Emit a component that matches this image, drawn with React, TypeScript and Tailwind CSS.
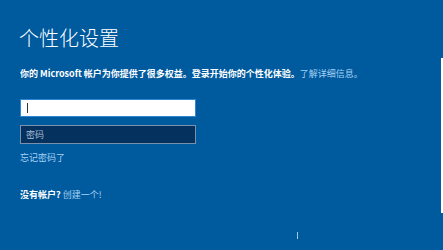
export default function App() {
  const cjk = { fontFamily: '"Noto Sans CJK SC", "Noto Sans", sans-serif' };
  return (
    <div className="relative w-[443px] h-[250px] overflow-hidden bg-[#005a9e] text-white" style={cjk}>
      <div className="flex flex-col pl-[19px] pt-[26px]">
        <h1 className="text-[20px] leading-[24px] font-light">个性化设置</h1>
        <p className="mt-[18px] pl-px text-[9px] leading-[12px] font-bold whitespace-nowrap">
          你的 Microsoft 帐户为你提供了很多权益。登录开始你的个性化体验。
          <span className="text-[#a6d2f5] font-normal">了解详细信息。</span>
        </p>
        <div className="mt-[19px] ml-px w-[176px] h-[18px] bg-white border border-[#2a86d6] flex items-center pl-[6px]">
          <div className="w-px h-[10px] bg-[#333]" />
        </div>
        <div className="mt-[8px] ml-px w-[176px] h-[19px] bg-[#05315e] border border-[#7990ad] flex items-center pl-[5px] text-[9px] text-[#a9bcd3]">
          密码
        </div>
        <div className="mt-[8px] pl-px text-[9px] leading-[12px] text-[#a6d2f5]">忘记密码了</div>
        <div className="mt-[25px] pl-px text-[9px] leading-[12px] whitespace-nowrap">
          <span className="font-bold">没有帐户? </span>
          <span className="text-[#a6d2f5]">创建一个!</span>
        </div>
      </div>
      <div className="absolute right-0 top-[58px] w-[2px] h-[155px] bg-white" />
      <div className="absolute left-[297px] top-[232px] w-px h-[7px] bg-[#a8c8e8]" />
    </div>
  );
}
